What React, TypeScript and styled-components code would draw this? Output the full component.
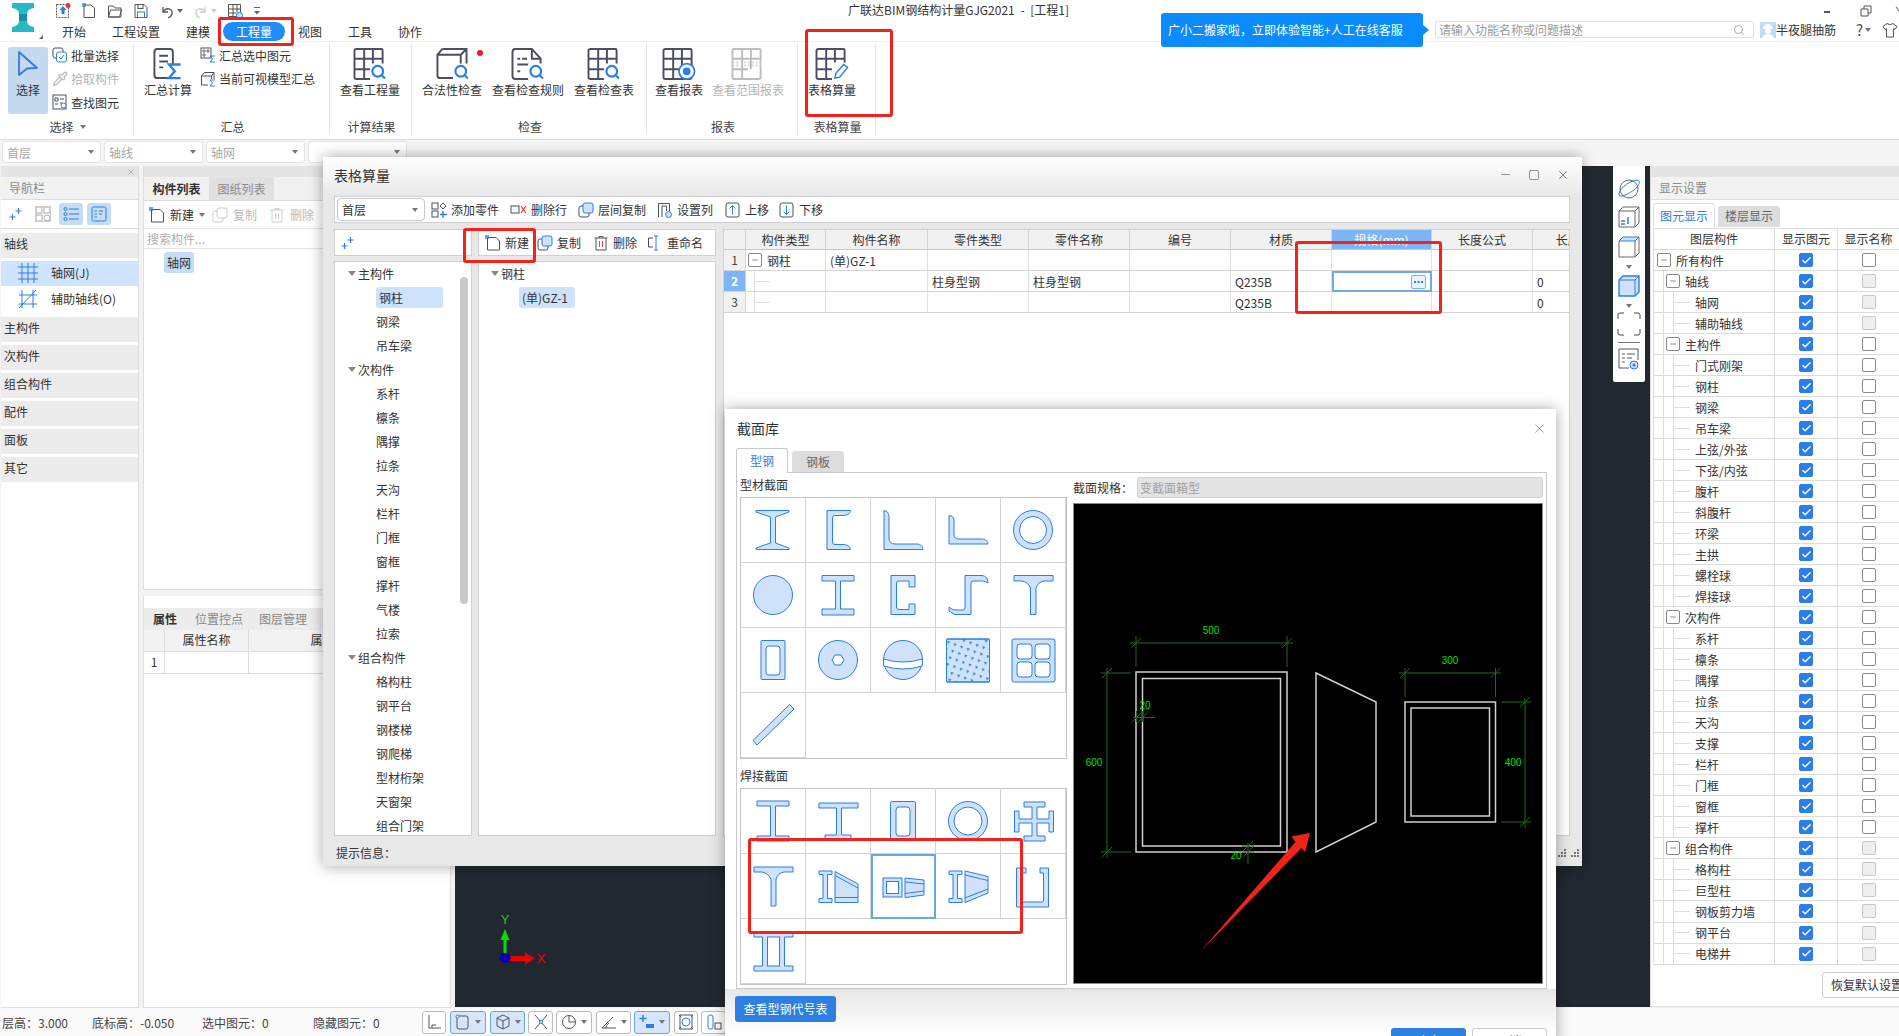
import React from 'react';
import styled, { createGlobalStyle } from 'styled-components';
import { Check, Minus, Pipette, Search, Square, X } from 'lucide-react';

const BLUE = '#2b7de9';
const DK = '#4a5060';
const GR = '#bdbdbd';
const FILL = '#cfe2fb';

const Global = createGlobalStyle`
  html, body { margin: 0; padding: 0; background: #f5f5f5; overflow: hidden; }
  body { font-family: "Noto Sans CJK SC", "Liberation Sans", sans-serif; font-size: 12px; color: #333; }
  svg { display: block; flex: none; }
`;

const Page = styled.div`position: relative; width: 1899px; height: 1036px; overflow: hidden; display: flex; flex-direction: column; background: #f3f3f3;`;

/* ---------- top bar ---------- */
const TopBar = styled.header`display: grid; grid-template-columns: 848px 313px 738px; height: 41px; flex: none; background: #fff;`;
const LeftBlock = styled.div`display: flex;`;
const LogoBox = styled.div`width: 44px; padding: 3px 0 0 11px; box-sizing: border-box; position: relative;
  &::after { content: ""; position: absolute; left: 39px; top: 35px; border-left: 4px solid transparent; border-bottom: 4px solid #666; }`;
const Stack = styled.div`display: flex; flex-direction: column;`;
const QatRow = styled.div`display: flex; align-items: center; gap: 10px; height: 22px; padding-left: 11px;`;
const QatCaret = styled.span<{ $c?: string }>`width: 0; height: 0; margin-left: -8px; border: 3px solid transparent; border-top: 4px solid ${p => p.$c || '#666'}; border-bottom: 0;`;
const MenuRow = styled.nav`display: flex; padding-left: 5px;`;
const MenuItem = styled.div<{ $on?: boolean }>`padding: 0 13px; height: 19px; line-height: 19px; border-radius: 10px; background: ${p => (p.$on ? '#1e8cff' : 'transparent')}; color: ${p => (p.$on ? '#fff' : '#333')};`;
const Title = styled.div`padding-top: 1px; line-height: 18px; white-space: nowrap; color: #333; word-spacing: 3px;`;
const RightBlock = styled.div`display: flex; align-items: flex-start;`;
const Notice = styled.div`position: relative; margin-top: 13px; width: 262px; height: 34px; line-height: 34px; padding-left: 7px; box-sizing: border-box; background: #0a8cff; color: #fff; border-radius: 3px; white-space: nowrap; z-index: 2;
  &::after { content: ""; position: absolute; right: -6px; top: 12px; border-left: 6px solid #0a8cff; border-top: 5px solid transparent; border-bottom: 5px solid transparent; }`;
const RightStack = styled.div`margin-left: 12px; width: 464px; display: flex; flex-direction: column;`;
const WinRow = styled.div`display: flex; height: 21px; align-items: center; color: #555;`;
const SearchRow = styled.div`display: flex; align-items: center; height: 17px;`;
const SearchBox = styled.div`width: 319px; height: 17px; box-sizing: border-box; display: flex; align-items: center; justify-content: space-between; padding: 0 8px 0 3px; border: 1px solid #e2e2e2; border-radius: 2px; color: #9a9a9a; line-height: 15px;`;
const Avatar = styled.span`margin-left: 6px;`;
const UserName = styled.span`width: 60px; white-space: nowrap; color: #333;`;
const Help = styled.span`width: 26px; margin-left: 20px; font-size: 15px; line-height: 17px; color: #555; display: flex; align-items: center; gap: 2px;`;

/* ---------- ribbon ---------- */
const Ribbon = styled.section`display: flex; height: 99px; box-sizing: border-box; flex: none; background: #fff; border-top: 1px solid #f0f0f0; border-bottom: 1px solid #dcdcdc;`;
const Group = styled.div<{ $w: number }>`display: flex; flex-direction: column; width: ${p => p.$w}px; height: 91px; margin-top: 2px; box-sizing: border-box; border-right: 1px solid #e4e4e4;`;
const GroupBody = styled.div<{ $pad?: number; $gap?: number }>`flex: 1; display: flex; align-items: flex-start; padding: 3px 0 0 ${p => p.$pad ?? 10}px; gap: ${p => p.$gap ?? 0}px;`;
const GroupLabel = styled.div`height: 16px; line-height: 16px; text-align: center; color: #444; display: flex; justify-content: center; align-items: center; gap: 6px; padding-left: 2px;`;
const BigBtn = styled.div<{ $off?: boolean }>`position: relative; display: flex; flex-direction: column; align-items: center; padding-top: 1px; white-space: nowrap; color: ${p => (p.$off ? '#b5b5b5' : '#333')};
  & > svg { margin-bottom: 1px; }`;
const SelectBtn = styled(BigBtn)`width: 40px; height: 67px; padding-top: 3px; box-sizing: border-box; background: #c5d9f0; border-radius: 2px;
  & > svg { margin-bottom: 4px; }`;
const SmallList = styled.div<{ $ml: number }>`display: flex; flex-direction: column; gap: 7.5px; margin-left: ${p => p.$ml}px;`;
const SmallBtn = styled.div<{ $off?: boolean }>`display: flex; align-items: center; gap: 3px; height: 16px; white-space: nowrap; color: ${p => (p.$off ? '#b5b5b5' : '#333')};`;
const RedDot = styled.span`position: absolute; right: -1px; top: 3px; width: 6px; height: 6px; border-radius: 50%; background: #ee1c25;`;
const TinyCaret = styled.span`display: inline-block; width: 0; height: 0; border: 3px solid transparent; border-top: 4px solid #777; border-bottom: 0;`;

/* ---------- combos ---------- */
const ComboBar = styled.div`display: flex; gap: 3px; height: 26px; flex: none; box-sizing: border-box; padding: 1px 0 0 2px; background: #f5f5f5;`;
const Combo = styled.div`width: 99px; height: 22px; box-sizing: border-box; padding: 0 6px 0 4px; display: flex; align-items: center; justify-content: space-between; background: #fff; border: 1px solid #e4e4e4; border-radius: 3px; color: #a8a8a8;`;

/* ---------- main ---------- */
const Main = styled.main`flex: 1; display: flex; min-height: 0; background: #f3f3f3;`;
const NavPanel = styled.aside`width: 138px; margin-left: 1px; background: #fff; border-right: 1px solid #dedede; border-bottom: 1px solid #dedede; box-sizing: border-box; display: flex; flex-direction: column;`;
const Strip = styled.div`height: 11px; flex: none; background: #e5e5e5; display: flex; justify-content: flex-end; align-items: center; padding-right: 2px; color: #aaa;`;
const PanelTitle = styled.div`height: 22px; line-height: 22px; flex: none; padding-left: 8px; background: #f2f2f2; color: #8a8a8a; border-bottom: 1px solid #dcdcdc;`;
const NavTools = styled.div`display: flex; align-items: center; height: 28px; flex: none; padding-left: 8px; border-bottom: 1px solid #dcdcdc;`;
const ToolToggle = styled.span<{ $ml: number }>`display: flex; align-items: center; justify-content: center; width: 24px; height: 22px; margin-left: ${p => p.$ml}px; border-radius: 3px; background: #c5dcf5;`;
const GreyIcon = styled.span<{ $ml: number }>`margin-left: ${p => p.$ml}px;`;
const NavHead = styled.div<{ $mt: number }>`height: 25px; line-height: 22px; flex: none; margin-top: ${p => p.$mt}px; padding-left: 3px; background: #ececec; color: #333;`;
const NavItem = styled.div<{ $on?: boolean; $h: number; $mt?: number }>`height: ${p => p.$h}px; flex: none; display: flex; align-items: center; gap: 13px; padding: 0 0 2px 17px; box-sizing: border-box; margin-top: ${p => p.$mt ?? 0}px; background: ${p => (p.$on ? '#cfe4ff' : '#fff')};`;

const ListColumn = styled.div`width: 308px; margin-left: 4px; display: flex; flex-direction: column; gap: 6px;`;
const ListPanel = styled.section<{ $grow?: boolean }>`${p => (p.$grow ? 'flex: 1;' : 'height: 424px;')} background: #fff; box-sizing: border-box; border: 1px solid #dedede; border-top: 0; overflow: hidden;`;
const ListTabs = styled.div`display: flex; height: 23px; background: #f1f1f1; border-bottom: 1px solid #dcdcdc;`;
const ListTab = styled.div<{ $on?: boolean }>`width: 65px; text-align: center; line-height: 23px; font-weight: ${p => (p.$on ? 700 : 400)}; color: ${p => (p.$on ? '#333' : '#8a8a8a')}; background: ${p => (p.$on ? '#f1f1f1' : '#e0e0e0')};`;
const ListTools = styled.div`display: flex; align-items: center; height: 27px; padding-left: 5px; gap: 5px; border-bottom: 1px solid #e4e4e4;`;
const ListTool = styled.span<{ $off?: boolean; $ml?: number }>`display: flex; align-items: center; gap: 5px; margin-left: ${p => p.$ml ?? 0}px; color: ${p => (p.$off ? '#bbb' : '#333')};`;
const SearchHint = styled.div`height: 19px; line-height: 19px; padding-left: 3px; color: #b0b0b0; border-bottom: 1px solid #e4e4e4;`;
const Chip = styled.span<{ $ml?: number; $mt?: number }>`display: inline-block; padding: 0 3px; height: 21px; line-height: 21px; border-radius: 3px; background: #c5dcf8; color: #333; margin: ${p => p.$mt ?? 0}px 0 0 ${p => p.$ml ?? 0}px;`;
const PropTabs = styled.div`display: flex; height: 22px; background: #ececec; margin-top: 12px; line-height: 21px; color: #888;`;
const PropTab = styled.span<{ $on?: boolean; $w: number }>`width: ${p => p.$w}px; text-align: center; font-weight: ${p => (p.$on ? 700 : 400)}; color: ${p => (p.$on ? '#333' : '#888')};`;
const PropRow = styled.div<{ $head?: boolean }>`display: grid; grid-template-columns: 21px 84px 160px 1fr; height: 21px; line-height: 19px; background: ${p => (p.$head ? '#f2f2f2' : '#fff')}; border-bottom: 1px solid #dedede;
  & > span { border-right: 1px solid #dedede; text-align: center; }`;

const Canvas = styled.div`position: relative; flex: 1; margin-left: 4px; margin-bottom: 1px; background: #212830;`;
const ViewBar = styled.div`position: absolute; left: 1158px; top: 0; width: 32px; height: 216px; background: #fff; border-radius: 0 0 2px 2px; display: flex; flex-direction: column; align-items: center; padding-top: 11px; box-sizing: border-box;`;
const ViewItem = styled.span<{ $mt: number }>`margin-top: ${p => p.$mt}px; display: flex;`;
const ViewRule = styled.div`width: 22px; height: 1px; background: #777; margin-top: 6px;`;
const AxisBox = styled.div`position: absolute; left: 40px; top: 744px;`;

const RightPanel = styled.aside`width: 249px; flex: none; display: flex; flex-direction: column; box-sizing: border-box; background: #fff; border-left: 1px solid #dedede; border-bottom: 1px solid #dedede; margin-bottom: 1px; overflow: hidden;`;
const DispTabs = styled.div`display: flex; align-items: flex-end; gap: 3px; height: 27px; padding-left: 2px; flex: none;`;
const DispTab = styled.div<{ $on?: boolean }>`width: 62px; text-align: center; height: ${p => (p.$on ? 24 : 21)}px; line-height: ${p => (p.$on ? 23 : 20)}px; box-sizing: border-box; border-radius: 3px 3px 0 0; ${p => (p.$on ? `color:${BLUE};background:#fff;border:1px solid #ddd;border-bottom:0;` : 'color:#666;background:#ddd;')}`;
const DispTable = styled.div`margin: 1px 0 0 2px; width: 246px; border-top: 1px solid #ddd; border-left: 1px solid #ddd; flex: none;`;
const DispRow = styled.div<{ $h: number }>`display: grid; grid-template-columns: 121px 63px 62px; height: ${p => p.$h}px; box-sizing: border-box; border-bottom: 1px solid #dcdcdc;`;
const DispHead = styled.div`text-align: center; line-height: 20px; white-space: nowrap; border-right: 1px solid #dcdcdc;`;
const CheckCell = styled.div`display: flex; align-items: center; justify-content: center; border-right: 1px solid #dcdcdc;`;
const TreeCell = styled.div<{ $lv: number }>`display: flex; align-items: center; white-space: nowrap; border-right: 1px solid #dcdcdc; box-sizing: border-box;
  padding-left: ${p => [3, 12, 41][p.$lv]}px;
  background:
    ${p => (p.$lv > 0 ? 'linear-gradient(#ddd,#ddd) 9px 0/1px 100% no-repeat,' : '')}
    ${p => (p.$lv > 1 ? 'linear-gradient(#ddd,#ddd) 19px 0/1px 100% no-repeat, linear-gradient(#ddd,#ddd) 19px 50%/17px 1px no-repeat,' : '')}
    #fff;`;
const Expander = styled.span`display: inline-flex; align-items: center; justify-content: center; width: 12px; height: 12px; margin-right: 5px; border: 1px solid #888; border-radius: 2px; background: #fff; color: #555; flex: none;`;
const CheckBox = styled.span<{ $on?: boolean; $off?: boolean }>`width: 14px; height: 14px; box-sizing: border-box; display: flex; align-items: center; justify-content: center; border-radius: 2px; background: ${p => (p.$on ? BLUE : p.$off ? '#eee' : '#fff')}; border: 1px solid ${p => (p.$on ? BLUE : p.$off ? '#c8c8c8' : '#8a8a8a')};`;
const RestoreBtn = styled.div`margin: 7px 0 0 171px; width: 100px; height: 26px; flex: none; line-height: 24px; padding-left: 8px; box-sizing: border-box; border: 1px solid #ccc; border-radius: 3px; white-space: nowrap; background: #fff;`;

/* ---------- status bar ---------- */
const StatusBar = styled.footer`display: flex; align-items: center; height: 28px; flex: none; padding-left: 2px; background: #fafafa; white-space: nowrap; color: #444;`;
const StatusItem = styled.span<{ $w: number }>`width: ${p => p.$w}px;`;
const StatusBtn = styled.span<{ $w: number; $on?: boolean; $gap: number }>`width: ${p => p.$w}px; height: 23px; margin-left: ${p => p.$gap}px; box-sizing: border-box; display: flex; align-items: center; justify-content: center; gap: 4px; border: 1px solid ${p => (p.$on ? '#69a5e8' : '#bbb')}; border-radius: 3px; background: ${p => (p.$on ? '#d6e6fa' : '#fff')};`;

/* ---------- windows ---------- */
const Win = styled.div<{ $l: number; $t: number; $w: number; $h: number; $bg: string }>`position: absolute; left: ${p => p.$l}px; top: ${p => p.$t}px; width: ${p => p.$w}px; height: ${p => p.$h}px; background: ${p => p.$bg}; box-shadow: 0 0 14px rgba(0,0,0,.35); display: flex; flex-direction: column; box-sizing: border-box;`;
const WinTitle = styled.div<{ $h: number; $pl: number; $pb?: number; $pr?: number }>`display: flex; align-items: center; justify-content: space-between; height: ${p => p.$h}px; flex: none; box-sizing: border-box; padding: 0 ${p => p.$pr ?? 12}px ${p => p.$pb ?? 0}px ${p => p.$pl}px; font-size: 14px; color: #333;`;
const WinBtns = styled.div`display: flex; gap: 16px; color: #555; align-items: center;`;
const WinToolbar = styled.div`display: flex; align-items: center; height: 27px; flex: none; box-sizing: border-box; margin: 0 12px 0 11px; padding-left: 2px; background: #fff; border: 1px solid #cfcfd4;`;
const FloorCombo = styled.div`width: 88px; height: 23px; box-sizing: border-box; display: flex; align-items: center; justify-content: space-between; padding: 0 6px 0 4px; border: 1px solid #c8c8c8; border-radius: 4px; font-size: 12px; margin-right: 6px;`;
const ToolItem = styled.span<{ $ml: number }>`display: flex; align-items: center; gap: 4px; margin-left: ${p => p.$ml}px; white-space: nowrap; font-size: 12px;`;
const WinBody = styled.div`display: flex; height: 607px; flex: none; margin: 6px 12px 0 11px; gap: 6px;`;
const TreeCol = styled.div<{ $w: number }>`width: ${p => p.$w}px; flex: none; display: flex; flex-direction: column; gap: 5px;`;
const TreeTools = styled.div`height: 27px; flex: none; box-sizing: border-box; background: #fff; border: 1px solid #cfcfd4; display: flex; align-items: center; padding-left: 6px;`;
const TreePanel = styled.div`position: relative; flex: 1; background: #fff; border: 1px solid #cfcfd4; box-sizing: border-box; overflow: hidden;`;
const TreeRow = styled.div<{ $indent: number }>`height: 23.97px; display: flex; align-items: center; padding-left: ${p => p.$indent}px; white-space: nowrap;
  & > i { width: 0; height: 0; border: 4px solid transparent; border-top: 5px solid #888; border-bottom: 0; margin-right: 2px; }`;
const TreeChip = styled.span<{ $w: number }>`width: ${p => p.$w}px; height: 21px; line-height: 21px; padding-left: 3px; box-sizing: border-box; background: ${FILL}; border-radius: 3px;`;
const Scrollbar = styled.div`position: absolute; right: 3px; top: 15px; width: 8px; height: 327px; border-radius: 4px; background: #c8c8c8;`;
const TablePanel = styled.div`flex: 1; margin-left: 1px; background: #fff; border: 1px solid #cfcfd4; box-sizing: border-box; overflow: hidden;`;
const DataGrid = styled.div`display: grid; grid-template-columns: 22px 80px 102px 101px 101px 101px 101px 100px 101px 101px; grid-template-rows: 20px repeat(3, 21px);`;
const GHead = styled.div<{ $sel?: boolean }>`text-align: center; line-height: 19px; white-space: nowrap; box-sizing: border-box; background: ${p => (p.$sel ? '#7cb6f6' : '#f1f1f1')}; color: ${p => (p.$sel ? '#fff' : '#333')}; border-right: 1px solid #d4d4d4; border-bottom: 1px solid #c8c8c8;`;
const GNum = styled.div<{ $sel?: boolean }>`text-align: center; line-height: 20px; box-sizing: border-box; font-weight: ${p => (p.$sel ? 700 : 400)}; background: ${p => (p.$sel ? '#7cb6f6' : '#f1f1f1')}; color: ${p => (p.$sel ? '#fff' : '#444')}; border-right: 1px solid #d4d4d4; border-bottom: 1px solid #d4d4d4;`;
const GCell = styled.div<{ $tree?: boolean; $tight?: boolean }>`display: flex; align-items: center; padding-left: ${p => (p.$tight ? 2 : 4)}px; box-sizing: border-box; white-space: nowrap; border-right: 1px solid #e0e0e0; border-bottom: 1px solid #d4d4d4;
  ${p => (p.$tree ? 'background: linear-gradient(#ddd,#ddd) 8px 0/1px 100% no-repeat, linear-gradient(#ddd,#ddd) 8px 50%/16px 1px no-repeat;' : '')}`;
const GEdit = styled.div`display: flex; align-items: center; justify-content: flex-end; padding-right: 4px; box-sizing: border-box; border: 2px solid #6fa9e6;`;
const DotsBtn = styled.span`width: 15px; height: 14px; display: flex; align-items: center; justify-content: center; box-sizing: border-box; border: 1px solid #7fb0ea; border-radius: 2px; background: #e9f2fd;`;
const HintBar = styled.div`height: 30px; padding: 3px 3px 0 13px; box-sizing: border-box; flex: none; display: flex; justify-content: space-between; align-items: center;`;

const SecTabs = styled.div`display: flex; align-items: flex-end; gap: 4px; height: 25px; padding-left: 11px; flex: none;`;
const SecTab = styled.div<{ $on?: boolean }>`width: 52px; height: ${p => (p.$on ? 25 : 21)}px; line-height: ${p => (p.$on ? 23 : 21)}px; box-sizing: border-box; text-align: center; border-radius: 3px 3px 0 0; position: relative; top: ${p => (p.$on ? 1 : 0)}px; ${p => (p.$on ? `color:${BLUE};background:#fff;border:1px solid #c8c8d0;border-bottom:0;` : 'color:#666;background:#ddd;')}`;
const SecBox = styled.div`display: flex; gap: 6px; width: 811px; height: 517px; flex: none; margin-left: 11px; padding-left: 3px; box-sizing: border-box; background: #fff; border: 1px solid #c8c8d0;`;
const SecLeft = styled.div`width: 327px; display: flex; flex-direction: column;`;
const SecLabel = styled.div<{ $h: number; $lh: number }>`height: ${p => p.$h}px; flex: none; line-height: ${p => p.$lh}px;`;
const SecGrid = styled.div<{ $rows: number }>`display: grid; grid-template-columns: repeat(5, 65px); grid-auto-rows: 65px; width: 327px; height: ${p => p.$rows * 65 + 2}px; box-sizing: border-box; border: 1px solid #c4c4c4; flex: none;`;
const SecCell = styled.div<{ $sel?: boolean; $empty?: boolean }>`box-sizing: border-box; ${p => (p.$empty ? '' : 'border-right: 1px solid #d4d4d4; border-bottom: 1px solid #d4d4d4;')} ${p => (p.$sel ? 'outline: 2px solid #68a8e6; outline-offset: -2px;' : '')}`;
const SecRight = styled.div`flex: 1; padding-top: 4px; display: flex; flex-direction: column; gap: 5px;`;
const SpecRow = styled.div`display: flex; align-items: center; height: 21px; flex: none;`;
const SpecLabel = styled.span`width: 64px; flex: none; white-space: nowrap;`;
const SpecInput = styled.div`width: 406px; height: 21px; line-height: 19px; box-sizing: border-box; padding-left: 2px; background: #e3e3e3; border: 1px solid #ccced6; border-radius: 3px; color: #a0a0a0;`;
const BlackView = styled.div`width: 470px; height: 481px; flex: none; background: #000; border: 1px solid #888; box-sizing: border-box;`;
const SecFoot = styled.div`flex: 1; background: linear-gradient(#e6e6e6, #fff 70%); padding: 7px 9px 0 10px; display: flex; flex-direction: column;`;
const BlueBtn = styled.div<{ $w: number }>`width: ${p => p.$w}px; height: 26px; line-height: 25px; flex: none; text-align: center; border-radius: 3px; background: #2d80e2; color: #fff;`;
const ActionRow = styled.div`display: flex; justify-content: flex-end; gap: 6px; margin-top: 6px;`;
const PlainBtn = styled.div<{ $w: number }>`width: ${p => p.$w}px; height: 26px; line-height: 24px; text-align: center; box-sizing: border-box; border: 1px solid #ccc; border-radius: 3px; background: #fff;`;

const RedBox = styled.div<{ $l: number; $t: number; $w: number; $h: number }>`position: absolute; left: ${p => p.$l}px; top: ${p => p.$t}px; width: ${p => p.$w}px; height: ${p => p.$h}px; box-sizing: border-box; border: 3px solid #f5211a; border-radius: 3px; pointer-events: none;`;
const ArrowLayer = styled.svg`position: absolute; left: 1195px; top: 828px;`;

/* ---------- icons ---------- */
type P = { c?: string };
const S = ({ s = 16, vb = 16, children }: { s?: number; vb?: number; children: React.ReactNode }) => (
  <svg width={s} height={s} viewBox={`0 0 ${vb} ${vb}`} fill="none">{children}</svg>
);
const Logo = () => (
  <svg width="24" height="29" viewBox="0 0 24 29"><path d="M1 0h22v5q-7 1-7 6v7q0 5 7 6v5H1v-5q7-1 7-6v-7Q8 6 1 5z" fill="#28b8c8" /><path d="M8 11h8v7H8z" fill="#1b8fa6" /></svg>
);
const QatUpload = () => <S><rect x="1.5" y="1.5" width="12" height="13" stroke="#555" strokeDasharray="2 1" /><path d="M8 3l3.500 4H9.500v4h-3V7H4.500z" fill={BLUE} /><circle cx="13" cy="2.500" r="2.500" fill="#e33" /></S>;
const QatDoc = () => <S><path d="M3 2v12.500h10.500V5L10 2z" stroke="#555" /><rect x="1" y="0" width="4" height="4" fill={BLUE} opacity=".7" /></S>;
const QatFolder = () => <S><path d="M1.500 3h5l1.500 2h6v9h-12.500z" stroke="#555" /><path d="M3.500 7h11l-2 7H1.500z" stroke="#555" /></S>;
const QatSave = () => <S><path d="M2 1.500h9l3 3V14.500H2z" stroke="#555" /><rect x="5" y="1.500" width="5" height="4" stroke="#555" /><rect x="4.500" y="9" width="7" height="5.500" stroke={BLUE} /></S>;
const QatUndo = ({ c = '#555' }: P) => <S><path d="M4 4v5h5" stroke={c} strokeWidth="1.300" /><path d="M4 9c3-5 10-4 9 2-.500 2-2 3-4 4" stroke={c} strokeWidth="1.300" /></S>;
const QatRedo = ({ c = '#ccc' }: P) => <S><path d="M12 4v5H7" stroke={c} strokeWidth="1.300" /><path d="M12 9C9 4 2 5 3 11c.500 2 2 3 4 4" stroke={c} strokeWidth="1.300" /></S>;
const QatGrid = () => <S><path d="M1.500 1.500h12v12h-12zM1.500 6h12M1.500 10h8M6 1.500v12M10 1.500v8" stroke="#555" /><circle cx="12.500" cy="12.500" r="3" fill={FILL} stroke={BLUE} /></S>;
const QatMore = () => <svg width="8" height="10" viewBox="0 0 8 10"><path d="M1 1.500h6" stroke="#666" /><path d="M1 5l3 3.500L7 5z" fill="#666" /></svg>;
const AvatarIcon = () => <S><rect width="16" height="16" fill="#bcdcf7" /><path d="M3 7a5 5 0 0 1 10 0z" fill="#fff" /><circle cx="8" cy="9" r="3" fill="#fff" /><path d="M2 16q1-4 6-4t6 4z" fill="#fff" /></S>;
const ShirtIcon = () => <S><path d="M5 1.500L1 4.500l2 3 1.500-1V15h7V6.500l1.500 1 2-3-4-3Q8 4 5 1.500z" stroke="#555" /></S>;

const SelectArrow = () => <svg width="22" height="27" viewBox="0 0 22 27" fill="none"><path d="M2 2l18 16-10 .5L2 25z" stroke={BLUE} strokeWidth="1.800" strokeLinejoin="round" /></svg>;
const BatchIcon = () => <S><rect x="1" y="1" width="10" height="10" rx="2" stroke={DK} /><rect x="4.500" y="5" width="10" height="10" rx="2" fill="#fff" stroke={BLUE} /><path d="M7 10l2 2 3-4" stroke={BLUE} /></S>;
const FindIcon = () => <S><rect x="1" y="1" width="13" height="14" stroke={DK} /><path d="M3 4h3v3H3zM8 5h4M3 10h3M8 9h2" stroke={DK} /><circle cx="11.500" cy="11.500" r="2.500" fill="#fff" stroke={BLUE} /></S>;
const SumSmall = () => <S><rect x="1" y="1" width="10" height="10" stroke={DK} /><path d="M3 3h2v2H3zM7 3h2v2H7zM3 7h2v2H3z" stroke={DK} strokeWidth=".800" /><path d="M15 9h-5l2.500 3L10 15h5" stroke={BLUE} /></S>;
const CubeSum = () => <S><path d="M1.500 5l3-3.500H14v9.500l-2 3H1.500z M1.500 5h10v9.500 M11.500 5L14 1.500" stroke={DK} /><rect x="8" y="8" width="8" height="8" fill="#fff" /><path d="M15 9h-5l2.500 3L10 15h5" stroke={BLUE} /></S>;

const Badge = ({ kind }: { kind: 'search' | 'eye' | 'pen' }) => {
  if (kind === 'search') return <g stroke={BLUE} strokeWidth="2.200"><rect x="17" y="16" width="17" height="17" fill="#fff" stroke="none" /><circle cx="25" cy="24" r="5.500" /><path d="M29 28l3.500 3.500" /></g>;
  if (kind === 'eye') return <g><circle cx="25" cy="24" r="8" fill="#fff" stroke={BLUE} strokeWidth="1.800" /><circle cx="25" cy="24" r="4" fill={BLUE} /></g>;
  return <g stroke={BLUE} strokeWidth="1.500"><rect x="17" y="15" width="17" height="18" fill="#fff" stroke="none" /><path d="M20 31l1-5L29 17l4 3-8 10z" fill="#fff" /></g>;
};
const TableBig = ({ badge, off }: { badge?: 'search' | 'eye' | 'pen'; off?: boolean }) => (
  <svg width="34" height="32" viewBox="0 0 34 33" fill="none">
    <path d="M3 1h26q1 0 1 2v27q0 2-2 2H3q-2 0-2-2V3q0-2 2-2zM1 11h29M1 22h16M11 1v31M20 1v21" stroke={off ? GR : DK} strokeWidth="2" />
    {off && <path d="M1 15h29M1 18h29" stroke="#d8d8d8" strokeWidth="2" strokeDasharray="2 2" />}
    {badge && <Badge kind={badge} />}
  </svg>
);
const SumBig = () => (
  <svg width="30" height="32" viewBox="0 0 30 33" fill="none">
    <path d="M19 31H4q-3 0-3-3V4q0-3 3-3h13q3 0 3 3v13" stroke={DK} strokeWidth="2" />
    <path d="M6 8h9M6 14h9M6 20h4" stroke={DK} strokeWidth="2" /><path d="M28 17H16l6 7-6 7h12" stroke={BLUE} strokeWidth="2.400" />
  </svg>
);
const CubeBig = () => (
  <svg width="32" height="32" viewBox="0 0 32 33" fill="none">
    <path d="M6 1h25v23M1 7l5-6M1 7h24v24H4q-3 0-3-3zM25 7l6-6" stroke={DK} strokeWidth="2" />
    <Badge kind="search" />
  </svg>
);
const DocBig = () => (
  <svg width="34" height="32" viewBox="0 0 34 33" fill="none">
    <path d="M4 1h17l9 10v21H4q-3 0-3-3V4q0-3 3-3zM21 1v10h9M6 11h3M11 11h5M6 17h12M6 24h3" stroke={DK} strokeWidth="2" />
    <Badge kind="search" />
  </svg>
);

const Sparkle = () => <svg width="14" height="14" viewBox="0 0 14 14"><path d="M9.500 1v6M6.500 4h6M3.500 7v6M.500 10h6" stroke={BLUE} strokeWidth="1.200" /></svg>;
const GridGrey = () => <S><rect x="1" y="1" width="6" height="6" stroke="#aaa" /><rect x="9" y="1" width="6" height="6" stroke="#aaa" /><rect x="1" y="9" width="6" height="6" stroke="#aaa" /><circle cx="12" cy="12" r="3" stroke="#aaa" /><rect x=".500" y=".500" width="15" height="15" stroke="#ccc" /></S>;
const ListIcon = () => <S><circle cx="2.500" cy="3" r="1.500" stroke={BLUE} /><circle cx="2.500" cy="8" r="1.500" stroke={BLUE} /><circle cx="2.500" cy="13" r="1.500" stroke={BLUE} /><path d="M6 3h10M6 8h10M6 13h10" stroke={BLUE} /></S>;
const DetailIcon = () => <S><rect x="1" y="1" width="14" height="14" rx="1.500" stroke={BLUE} /><path d="M3.500 5H6M8 5h4M3.500 8H6M8 8h3M3.500 11H6" stroke={BLUE} /></S>;
const AxisGrid = () => <svg width="20" height="20" viewBox="0 0 20 20"><path d="M0 4h20M0 10h20M0 16h20M4 0v20M10 0v20M16 0v20" stroke={BLUE} /></svg>;
const AxisAux = () => <svg width="20" height="20" viewBox="0 0 20 20"><path d="M1 6h18M1 15h18M4 1v18M15 1v18M1 19L18 1" stroke={BLUE} /></svg>;

const NewIcon = () => <S><path d="M2.500 2.500v12.500h12V6L11 2.500z" stroke={DK} /><rect x="0" y="0" width="4" height="4" fill={BLUE} opacity=".7" /></S>;
const CopyIcon = ({ off }: { off?: boolean }) => <S><rect x="1" y="4" width="10" height="11" rx="2" stroke={off ? '#ccc' : DK} /><rect x="5" y="1" width="10" height="10" rx="2" fill={off ? '#fff' : FILL} stroke={off ? '#ccc' : BLUE} /></S>;
const TrashIcon = ({ off }: { off?: boolean }) => <S><path d="M1.500 3h13M6 3V1.500h4V3M3 3v12h10V3" stroke={off ? '#ccc' : DK} /><path d="M6.500 6v6M9.500 6v6" stroke={off ? '#ccc' : '#e44'} /></S>;
const RenameIcon = () => <S><path d="M6 3H1.500v9H6" stroke={DK} /><path d="M9 1v14M7 1h4M7 15h4" stroke={BLUE} /></S>;
const AddPart = () => <S><rect x="1" y="1" width="6" height="6" stroke={DK} /><rect x="1" y="9" width="6" height="6" stroke={DK} /><path d="M12 1l3 3-3 3-3-3z" stroke={DK} /><path d="M12 9v7M9 12.500h7" stroke={BLUE} strokeWidth="1.400" /></S>;
const DelRow = () => <svg width="17" height="16" viewBox="0 0 17 16" fill="none"><rect x="1" y="4" width="8" height="7" stroke={DK} /><path d="M11 4l5 7M16 4l-5 7" stroke="#e33" strokeWidth="1.200" /></svg>;
const SetCol = () => <S><path d="M1.500 15V1.500h11V9M5 15V4h4.500v5" stroke={DK} /><circle cx="11.500" cy="12.500" r="3" fill={FILL} stroke={BLUE} /></S>;
const MoveIcon = ({ down }: { down?: boolean }) => <S><rect x="1" y="1" width="13" height="14" rx="2" stroke={DK} /><path d={down ? 'M7.500 3.500v9M4.500 9.500l3 3 3-3' : 'M7.500 12.500v-9M4.500 6.500l3-3 3 3'} stroke={BLUE} /></S>;
const Dots = () => <svg width="9" height="3" viewBox="0 0 9 3"><path d="M0 1h2v2H0zM3.500 1h2v2h-2zM7 1h2v2H7z" fill={BLUE} /></svg>;
const Grips = () => <svg width="22" height="10" viewBox="0 0 22 10"><path d="M7 1h2v2H7zM4 4h2v2H4zM7 4h2v2H7zM1 7h2v2H1zM4 7h2v2H4zM7 7h2v2H7zM20 1h2v2h-2zM17 4h2v2h-2zM20 4h2v2h-2zM14 7h2v2h-2zM17 7h2v2h-2zM20 7h2v2h-2z" fill="#777" /></svg>;

/* section icons in a 65 x 65 cell */
const Sec = ({ children }: { children: React.ReactNode }) => (
  <svg width="64" height="64" viewBox="0 0 64 64"><g fill={FILL} stroke="#2a7de1" strokeWidth="1">{children}</g></svg>
);
const W = { fill: '#fff' };
const sections: React.ReactNode[] = [
  <path key="a" d="M15 12.500H48V14L34.500 19V45L48 50V51.500H15V50L29.500 45V19L15 14Z" />,
  <path key="b" d="M21 12.500H44.500C44 16 41 17.500 37 17.500H29Q26.500 17.500 26.500 20V44Q26.500 46.500 29 46.500H37C41 46.500 44 48 44.500 51.500H21Z" />,
  <path key="c" d="M13 12.500C16 13 18 15 18 19V40Q18 46 24 46H46C50 46 52 49 52 51.500H13Z" />,
  <path key="d" d="M13 17.500C16 18 18 19 18 22V36Q18 41 23 41H46C50 41 52 44 52 46H13Z" />,
  <g key="e"><circle cx="32" cy="32" r="19.500" /><circle cx="32" cy="32" r="13.500" {...W} /></g>,
  <circle key="f" cx="32" cy="32" r="19.500" />,
  <path key="g" d="M16 12.500H48V18H34.500V46H48V52H16V46H29.500V18H16Z" />,
  <path key="h" d="M20 12.500H44V24H38V18H28Q25.500 18 25.500 20V44Q25.500 46.500 28 46.500H38V41H44V51.500H20Z" />,
  <path key="i" d="M29 12.500H46C50 13 52 16 52 20C49 18 46 18 43 18H37Q35 18 35 20V51.500H19L13 48V44C15 46 17 47 20 47H27Q29 47 29 45Z" />,
  <path key="j" d="M13 12.500H52V18H43Q37 19 35 25V51.500H29.500V25Q27 19 21 18H13Z" />,
  <g key="k"><rect x="20" y="12.500" width="24" height="39" rx="1" /><rect x="25" y="18" width="14" height="29" rx="3" {...W} /></g>,
  <g key="l"><circle cx="32" cy="32" r="19.500" /><path d="M26 32l3-5h6l3 5-3 5h-6z" {...W} /></g>,
  <g key="m"><circle cx="32" cy="32" r="19.500" /><path d="M12.500 31q19.500 6 39 0l-.3 7q-19 6-38.400 0z" {...W} /></g>,
  <g key="n"><defs><pattern id="dots" width="7" height="7" patternUnits="userSpaceOnUse" patternTransform="rotate(20)"><path d="M1 1l3 0-1.500 3z" fill="#2a7de1" stroke="none" /></pattern></defs><rect x="10.500" y="11" width="43" height="43" rx="1" /><rect x="10.500" y="11" width="43" height="43" rx="1" fill="url(#dots)" /></g>,
  <g key="o"><rect x="11" y="11" width="43" height="43" rx="2" /><rect x="16" y="16" width="15" height="15" rx="3" {...W} /><rect x="34" y="16" width="15" height="15" rx="3" {...W} /><rect x="16" y="34" width="15" height="15" rx="3" {...W} /><rect x="34" y="34" width="15" height="15" rx="3" {...W} /></g>,
  <path key="p" d="M48.500 11.500L53 16L16 52L12 47.500Z" />,
];
const HSmall = () => <path d="M13 17H26V20.500H21.500V44.500H26V48.500H13V44.500H17V20.500H13Z" />;
const welds: React.ReactNode[] = [
  <path key="a" d="M16 12H48V17H34.500V47H48V52H16V47H29.500V17H16Z" />,
  <path key="b" d="M13 14H52V19H35.500V46H45V51.500H19V46H30.500V19H13Z" />,
  <g key="c"><rect x="19.500" y="12.500" width="25" height="39" rx="2" /><rect x="25" y="18" width="14" height="29" rx="3" {...W} /></g>,
  <g key="d"><circle cx="32" cy="32" r="19.500" /><circle cx="32" cy="32" r="14" {...W} /></g>,
  <path key="e" d="M23 13H44V18H36V30H48V22H52.500V43H48V34H36V47H44V52H23V47H31V34H18V43H13.500V22H18V30H31V18H23Z" />,
  <path key="f" d="M13 13H52V18H43Q37 19 35 25V52H30V25Q27 19 21 18H13Z" />,
  <g key="g"><HSmall /><path d="M29 17.500L52 30V48.500H29Z" /><path d="M29 21.500L52 34M29 43.500H52" /></g>,
  <g key="h"><rect x="12" y="24" width="19" height="19" /><rect x="15.500" y="27.500" width="12" height="12" {...W} /><path d="M34 24L53 26V41L34 43.500Z" /><path d="M34 28L53 30M34 39.500L53 37" /></g>,
  <g key="i"><HSmall /><path d="M29 17L52 22.500V39L29 48.500Z" /><path d="M29 21L52 26.500M29 44L52 35" /></g>,
  <path key="j" d="M15.500 14H25V19H20.500V46Q20.500 48 22.500 48H41Q42.500 48 42.500 46V19H39V14H47.500V53H15.500Z" />,
  <g key="k"><path d="M13 13H52V18H43.500V47H52V52H13V47H21.500V18H13Z" /><rect x="26.500" y="18" width="12" height="29" {...W} /></g>,
];

const DimLine = styled.g`stroke: #1c6b1c; stroke-width: 1;`;
const DimText = styled.text`fill: #00e000; font-family: "Liberation Sans", sans-serif; font-size: 10px; text-anchor: middle;`;
const Outline = styled.g`fill: none; stroke: #cfcfcf; stroke-width: 1.500;`;
const tick = (x: number, y: number) => `M${x - 5} ${y + 5}L${x + 5} ${y - 5}`;
const BoxDrawing = () => (
  <svg width="468" height="479" viewBox="0 0 468 479">
    <Outline>
      <rect x="62" y="168" width="151" height="180" /><rect x="68.500" y="174.500" width="138" height="167.500" />
      <path d="M242 169L302 198V318L242 348Z" />
      <rect x="331" y="198" width="90.500" height="120" /><rect x="337" y="204" width="78.500" height="108" />
    </Outline>
    <DimLine fill="none">
      <path d={`M56 139H219M62 132V163M213 132V163 ${tick(62, 139)} ${tick(213, 139)}`} />
      <path d={`M33 164V354M27 169H57M27 348H57 ${tick(33, 169)} ${tick(33, 348)}`} />
      <path d={`M325 169H427M331 164V193M421.500 164V193 ${tick(331, 169)} ${tick(421.500, 169)}`} />
      <path d={`M451 194V324M427 198H457M427 318H457 ${tick(451, 198)} ${tick(451, 318)}`} />
      <path d={`M59 213.500H81M62.500 207V218M68.500 207V218 ${tick(62.500, 213.500)} ${tick(68.500, 213.500)}`} />
      <path d={`M174 339V360M168 342H180M168 348H180 ${tick(174, 342)} ${tick(174, 348)}`} />
    </DimLine>
    <DimText x="137" y="130">500</DimText>
    <DimText x="20" y="262">600</DimText>
    <DimText x="376" y="160">300</DimText>
    <DimText x="439" y="262">400</DimText>
    <DimText x="71" y="205">20</DimText>
    <DimText x="162" y="355">20</DimText>
  </svg>
);

const dispRows: [string, number, boolean?][] = [
  ['所有构件', 0], ['轴线', 1, true], ['轴网', 2, true], ['辅助轴线', 2, true], ['主构件', 1], ['门式刚架', 2], ['钢柱', 2], ['钢梁', 2], ['吊车梁', 2], ['上弦/外弦', 2], ['下弦/内弦', 2], ['腹杆', 2], ['斜腹杆', 2], ['环梁', 2], ['主拱', 2], ['螺栓球', 2], ['焊接球', 2], ['次构件', 1], ['系杆', 2], ['檩条', 2], ['隅撑', 2], ['拉条', 2], ['天沟', 2], ['支撑', 2], ['栏杆', 2], ['门框', 2], ['窗框', 2], ['撑杆', 2], ['组合构件', 1, true], ['格构柱', 2, true], ['巨型柱', 2, true], ['钢板剪力墙', 2, true], ['钢平台', 2, true], ['电梯井', 2, true],
];
const treeRows: [string, number][] = [
  ['主构件', 0], ['钢柱', 1], ['钢梁', 1], ['吊车梁', 1], ['次构件', 0], ['系杆', 1], ['檩条', 1], ['隅撑', 1], ['拉条', 1], ['天沟', 1], ['栏杆', 1], ['门框', 1], ['窗框', 1], ['撑杆', 1], ['气楼', 1], ['拉索', 1], ['组合构件', 0], ['格构柱', 1], ['钢平台', 1], ['钢楼梯', 1], ['钢爬梯', 1], ['型材桁架', 1], ['天窗架', 1], ['组合门架', 1],
];
const navSections = ['主构件', '次构件', '组合构件', '配件', '面板', '其它'];
const gridHeads = ['', '构件类型', '构件名称', '零件类型', '零件名称', '编号', '材质', '规格(mm)', '长度公式', '长度(mm)'];

const StatL = () => <S><path d="M3 1v13h12M6 14v-3h4" stroke="#555" /></S>;
const StatRect = () => <S><rect x="2" y="2" width="11" height="13" rx="2" stroke="#555" /><circle cx="2.500" cy="2.500" r="1.500" fill="#fff" stroke={BLUE} /></S>;
const StatCube = () => <S><path d="M8 1l6 3v8l-6 3-6-3V4zM2 4l6 3 6-3M8 7v8" stroke="#555" /></S>;
const StatX = () => <S><path d="M2 1l12 14M14 1L2 15" stroke="#555" /><circle cx="8" cy="8" r="1.500" fill="#fff" stroke={BLUE} /></S>;
const StatPie = () => <S><circle cx="8" cy="8" r="6.500" stroke="#555" /><path d="M8 2v6h6" stroke="#555" /></S>;
const StatAngle = () => <S><path d="M1 14h14M1 14L12 3M5 14q0-3 3-5" stroke="#555" /></S>;
const StatPlus = () => <S><path d="M4 1v7M.500 4.500h7" stroke={BLUE} strokeWidth="1.400" /><rect x="7" y="10" width="8" height="4" fill={BLUE} /></S>;
const StatFrame = () => <S><rect x="2" y="1" width="12" height="14" stroke="#555" /><circle cx="8" cy="8" r="4" stroke={BLUE} /><path d="M1 1l2 2M15 1l-2 2M1 15l2-2M15 15l-2-2" stroke="#555" /></S>;
const StatBar = () => <S><rect x="2" y="1" width="5" height="14" rx="2" stroke={BLUE} /><rect x="9" y="9" width="6" height="6" stroke="#555" /></S>;

export default function App() {
  return (
    <Page>
      <Global />
      <TopBar>
        <LeftBlock>
          <LogoBox><Logo /></LogoBox>
          <Stack>
            <QatRow>
              <QatUpload /><QatDoc /><QatFolder /><QatSave /><QatUndo /><QatCaret /><QatRedo /><QatCaret $c="#ccc" /><QatGrid /><QatMore />
            </QatRow>
            <MenuRow>
              <MenuItem>开始</MenuItem><MenuItem>工程设置</MenuItem><MenuItem>建模</MenuItem><MenuItem $on>工程量</MenuItem><MenuItem>视图</MenuItem><MenuItem>工具</MenuItem><MenuItem>协作</MenuItem>
            </MenuRow>
          </Stack>
        </LeftBlock>
        <Title>广联达BIM钢结构计量GJG2021 - [工程1]</Title>
        <RightBlock>
          <Notice>广小二搬家啦，立即体验智能+人工在线客服</Notice>
          <RightStack>
            <WinRow>
              <svg width="464" height="14" viewBox="0 0 464 14" fill="none"><path d="M389 8h6" stroke="#555" strokeWidth="2" /><path d="M426 5h7v7h-7zM429 5V2h7v7h-3" stroke="#555" /><path d="M461 3l3 4" stroke="#555" /></svg>
            </WinRow>
            <SearchRow>
              <SearchBox>请输入功能名称或问题描述<Search size={12} color="#aaa" /></SearchBox>
              <Avatar><AvatarIcon /></Avatar>
              <UserName>半夜腿抽筋</UserName>
              <Help>?<TinyCaret /></Help>
              <ShirtIcon />
            </SearchRow>
          </RightStack>
        </RightBlock>
      </TopBar>

      <Ribbon>
        <Group $w={134}>
          <GroupBody $pad={8}>
            <SelectBtn><SelectArrow />选择</SelectBtn>
            <SmallList $ml={4}>
              <SmallBtn><BatchIcon />批量选择</SmallBtn>
              <SmallBtn $off><Pipette size={16} color="#bbb" />拾取构件</SmallBtn>
              <SmallBtn><FindIcon />查找图元</SmallBtn>
            </SmallList>
          </GroupBody>
          <GroupLabel>选择<TinyCaret /></GroupLabel>
        </Group>
        <Group $w={196}>
          <GroupBody>
            <BigBtn><SumBig />汇总计算</BigBtn>
            <SmallList $ml={8}>
              <SmallBtn><SumSmall />汇总选中图元</SmallBtn>
              <SmallBtn><CubeSum />当前可视模型汇总</SmallBtn>
            </SmallList>
          </GroupBody>
          <GroupLabel>汇总</GroupLabel>
        </Group>
        <Group $w={82}>
          <GroupBody><BigBtn><TableBig badge="search" />查看工程量</BigBtn></GroupBody>
          <GroupLabel>计算结果</GroupLabel>
        </Group>
        <Group $w={235}>
          <GroupBody $gap={10}>
            <BigBtn><CubeBig /><RedDot />合法性检查</BigBtn>
            <BigBtn><DocBig />查看检查规则</BigBtn>
            <BigBtn><TableBig badge="search" />查看检查表</BigBtn>
          </GroupBody>
          <GroupLabel>检查</GroupLabel>
        </Group>
        <Group $w={151}>
          <GroupBody $pad={8} $gap={9}>
            <BigBtn><TableBig badge="eye" />查看报表</BigBtn>
            <BigBtn $off><TableBig off />查看范围报表</BigBtn>
          </GroupBody>
          <GroupLabel>报表</GroupLabel>
        </Group>
        <Group $w={78}>
          <GroupBody><BigBtn><TableBig badge="pen" />表格算量</BigBtn></GroupBody>
          <GroupLabel>表格算量</GroupLabel>
        </Group>
      </Ribbon>

      <ComboBar>
        <Combo>首层<TinyCaret /></Combo>
        <Combo>轴线<TinyCaret /></Combo>
        <Combo>轴网<TinyCaret /></Combo>
        <Combo><span /><TinyCaret /></Combo>
      </ComboBar>

      <Main>
        <NavPanel>
          <Strip><X size={10} /></Strip>
          <PanelTitle>导航栏</PanelTitle>
          <NavTools>
            <Sparkle />
            <GreyIcon $ml={12}><GridGrey /></GreyIcon>
            <ToolToggle $ml={8}><ListIcon /></ToolToggle>
            <ToolToggle $ml={4}><DetailIcon /></ToolToggle>
          </NavTools>
          <NavHead $mt={4}>轴线</NavHead>
          <NavItem $on $h={25} $mt={3}><AxisGrid />轴网(J)</NavItem>
          <NavItem $h={27}><AxisAux />辅助轴线(O)</NavItem>
          {navSections.map((s, i) => <NavHead key={s} $mt={i === 0 ? 4 : 3}>{s}</NavHead>)}
        </NavPanel>

        <ListColumn>
          <ListPanel>
            <Strip />
            <ListTabs><ListTab $on>构件列表</ListTab><ListTab>图纸列表</ListTab></ListTabs>
            <ListTools>
              <ListTool><NewIcon />新建<TinyCaret /></ListTool>
              <ListTool $off $ml={2}><CopyIcon off />复制</ListTool>
              <ListTool $off $ml={7}><TrashIcon off />删除</ListTool>
              <ListTool $ml={4}><CopyIcon /></ListTool>
            </ListTools>
            <SearchHint>搜索构件...</SearchHint>
            <Chip $ml={20} $mt={3}>轴网</Chip>
          </ListPanel>
          <ListPanel $grow>
            <PropTabs><PropTab $on $w={42}>属性</PropTab><PropTab $w={66}>位置控点</PropTab><PropTab $w={62}>图层管理</PropTab></PropTabs>
            <PropRow $head><span /><span>属性名称</span><span>属性值</span></PropRow>
            <PropRow><span>1</span><span /><span /></PropRow>
          </ListPanel>
        </ListColumn>

        <Canvas>
          <AxisBox>
            <svg width="60" height="60" viewBox="0 0 60 60">
              <text x="10" y="14" fill="#18c818" fontSize="13" textAnchor="middle" fontFamily="Liberation Sans, sans-serif">Y</text>
              <path d="M8.500 30h3v16h-3z" fill="#00e000" /><path d="M10 19l4.500 11h-9z" fill="#00e000" />
              <path d="M15 46h15v5H15z" fill="#ee0000" /><path d="M30 42.500l10 6-10 6z" fill="#ee0000" />
              <ellipse cx="10" cy="48" rx="5.500" ry="5" fill="#0000b0" />
              <text x="46" y="53" fill="#ee0000" fontSize="13" textAnchor="middle" fontFamily="Liberation Sans, sans-serif">X</text>
            </svg>
          </AxisBox>
          <ViewBar>
            <ViewItem $mt={0}><svg width="24" height="24" viewBox="0 0 24 24" fill="none"><circle cx="12" cy="12" r="9" stroke="#667" /><path d="M2 18C1 14 10 4 20 3c4 0 3 5-3 10-6 4-13 8-15 5z" stroke={BLUE} /></svg></ViewItem>
            <ViewItem $mt={5}><svg width="22" height="22" viewBox="0 0 22 22" fill="none"><path d="M1 5l4-4h16v16l-4 4H1zM1 5h16v16M17 5l4-4" stroke="#667" /><path d="M3 15h4M3 18h4M10 11v7" stroke={BLUE} strokeWidth="1.500" /></svg></ViewItem>
            <ViewItem $mt={8}><svg width="22" height="22" viewBox="0 0 22 22" fill="none"><path d="M5 1h16l-4 4H1z" fill={FILL} stroke={BLUE} /><path d="M1 5v16h16V5M21 1v16l-4 4" stroke="#667" /></svg></ViewItem>
            <ViewItem $mt={7}><TinyCaret /></ViewItem>
            <ViewItem $mt={6}><svg width="22" height="22" viewBox="0 0 22 22" fill={FILL}><path d="M5 1h16v16l-4 4H1V5z" stroke={BLUE} strokeWidth="1.400" /><path d="M1 5h16v16M17 5l4-4" stroke={BLUE} /></svg></ViewItem>
            <ViewItem $mt={7}><TinyCaret /></ViewItem>
            <ViewItem $mt={4}><svg width="24" height="24" viewBox="0 0 24 24" fill="none" stroke="#445"><path d="M1 7V3q0-2 2-2h4M17 1h4q2 0 2 2v4M23 17v4q0 2-2 2h-4M7 23H3q-2 0-2-2v-4" /></svg></ViewItem>
            <ViewRule />
            <ViewItem $mt={5}><svg width="22" height="22" viewBox="0 0 22 22" fill="none"><path d="M11 20H1V1h19v11M4 6h3M9 6h8M4 10h3M9 10h5M4 14h3" stroke="#556" /><circle cx="16" cy="17" r="4" fill={FILL} stroke={BLUE} /><circle cx="16" cy="17" r="1.500" fill={BLUE} /></svg></ViewItem>
          </ViewBar>
        </Canvas>

        <RightPanel>
          <Strip />
          <PanelTitle>显示设置</PanelTitle>
          <DispTabs><DispTab $on>图元显示</DispTab><DispTab>楼层显示</DispTab></DispTabs>
          <DispTable>
            <DispRow $h={21}><DispHead>图层构件</DispHead><DispHead>显示图元</DispHead><DispHead>显示名称</DispHead></DispRow>
            {dispRows.map(([name, lv, off]) => (
              <DispRow key={name} $h={21.03}>
                <TreeCell $lv={lv}>{lv < 2 && <Expander><Minus size={8} /></Expander>}{name}</TreeCell>
                <CheckCell><CheckBox $on><Check size={11} color="#fff" strokeWidth={3} /></CheckBox></CheckCell>
                <CheckCell><CheckBox $off={off} /></CheckCell>
              </DispRow>
            ))}
          </DispTable>
          <RestoreBtn>恢复默认设置</RestoreBtn>
        </RightPanel>
      </Main>

      <StatusBar>
        <StatusItem $w={90}>层高：3.000</StatusItem>
        <StatusItem $w={110}>底标高：-0.050</StatusItem>
        <StatusItem $w={111}>选中图元：0</StatusItem>
        <StatusItem $w={109}>隐藏图元：0</StatusItem>
        <StatusBtn $gap={0} $w={24}><StatL /></StatusBtn>
        <StatusBtn $gap={4} $w={36} $on><StatRect /><TinyCaret /></StatusBtn>
        <StatusBtn $gap={4} $w={35} $on><StatCube /><TinyCaret /></StatusBtn>
        <StatusBtn $gap={3} $w={25}><StatX /></StatusBtn>
        <StatusBtn $gap={3} $w={36}><StatPie /><TinyCaret /></StatusBtn>
        <StatusBtn $gap={4} $w={35}><StatAngle /><TinyCaret /></StatusBtn>
        <StatusBtn $gap={3} $w={36} $on><StatPlus /><TinyCaret /></StatusBtn>
        <StatusBtn $gap={4} $w={24}><StatFrame /></StatusBtn>
        <StatusBtn $gap={3} $w={25}><StatBar /></StatusBtn>
      </StatusBar>

      <Win $l={323} $t={157} $w={1259} $h={709} $bg="linear-gradient(#fff, #e8e8e8 39px, #e8e8e8)">
        <WinTitle $h={39} $pl={11} $pb={4}>
          表格算量
          <WinBtns>
            <Minus size={13} strokeWidth={1.200} /><Square size={12} strokeWidth={1.200} /><X size={14} strokeWidth={1.200} />
          </WinBtns>
        </WinTitle>
        <WinToolbar>
          <FloorCombo>首层<TinyCaret /></FloorCombo>
          <ToolItem $ml={0}><AddPart />添加零件</ToolItem>
          <ToolItem $ml={11}><DelRow />删除行</ToolItem>
          <ToolItem $ml={11}><CopyIcon />层间复制</ToolItem>
          <ToolItem $ml={11}><SetCol />设置列</ToolItem>
          <ToolItem $ml={12}><MoveIcon />上移</ToolItem>
          <ToolItem $ml={10}><MoveIcon down />下移</ToolItem>
        </WinToolbar>
        <WinBody>
          <TreeCol $w={138}>
            <TreeTools><Sparkle /></TreeTools>
            <TreePanel>
              {treeRows.map(([t, lv], i) => (
                <TreeRow key={t + i} $indent={lv === 0 ? 13 : 41}>
                  {lv === 0 && <i />}
                  {t === '钢柱' ? <TreeChip $w={67}>{t}</TreeChip> : t}
                </TreeRow>
              ))}
              <Scrollbar />
            </TreePanel>
          </TreeCol>
          <TreeCol $w={238}>
            <TreeTools>
              <ToolItem $ml={0}><NewIcon />新建</ToolItem>
              <ToolItem $ml={8}><CopyIcon />复制</ToolItem>
              <ToolItem $ml={12}><TrashIcon />删除</ToolItem>
              <ToolItem $ml={10}><RenameIcon />重命名</ToolItem>
            </TreeTools>
            <TreePanel>
              <TreeRow $indent={12}><i />钢柱</TreeRow>
              <TreeRow $indent={40}><TreeChip $w={56}>(单)GZ-1</TreeChip></TreeRow>
            </TreePanel>
          </TreeCol>
          <TablePanel>
            <DataGrid>
              {gridHeads.map(h => <GHead key={h} $sel={h === '规格(mm)'}>{h}</GHead>)}
              <GNum>1</GNum><GCell $tight><Expander><Minus size={8} /></Expander>钢柱</GCell><GCell>(单)GZ-1</GCell><GCell /><GCell /><GCell /><GCell /><GCell /><GCell /><GCell />
              <GNum $sel>2</GNum><GCell $tree /><GCell /><GCell>柱身型钢</GCell><GCell>柱身型钢</GCell><GCell /><GCell>Q235B</GCell><GEdit><DotsBtn><Dots /></DotsBtn></GEdit><GCell /><GCell>0</GCell>
              <GNum>3</GNum><GCell $tree /><GCell /><GCell /><GCell /><GCell /><GCell>Q235B</GCell><GCell /><GCell /><GCell>0</GCell>
            </DataGrid>
          </TablePanel>
        </WinBody>
        <HintBar>提示信息：<Grips /></HintBar>
      </Win>

      <Win $l={725} $t={409} $w={831} $h={640} $bg="#fff">
        <WinTitle $h={38} $pl={12} $pr={9}>截面库<X size={15} strokeWidth={1} color="#666" /></WinTitle>
        <SecTabs><SecTab $on>型钢</SecTab><SecTab>钢板</SecTab></SecTabs>
        <SecBox>
          <SecLeft>
            <SecLabel $h={24} $lh={24}>型材截面</SecLabel>
            <SecGrid $rows={4}>
              {sections.map((s, i) => <SecCell key={i}><Sec>{s}</Sec></SecCell>)}
              <SecCell $empty />
            </SecGrid>
            <SecLabel $h={29} $lh={33}>焊接截面</SecLabel>
            <SecGrid $rows={3}>
              {welds.map((s, i) => <SecCell key={i} $sel={i === 7}><Sec>{s}</Sec></SecCell>)}
            </SecGrid>
          </SecLeft>
          <SecRight>
            <SpecRow><SpecLabel>截面规格：</SpecLabel><SpecInput>变截面箱型</SpecInput></SpecRow>
            <BlackView><BoxDrawing /></BlackView>
          </SecRight>
        </SecBox>
        <SecFoot>
          <BlueBtn $w={101}>查看型钢代号表</BlueBtn>
          <ActionRow><BlueBtn $w={75}>确定</BlueBtn><PlainBtn $w={75}>取消</PlainBtn></ActionRow>
        </SecFoot>
      </Win>

      <RedBox $l={218} $t={17} $w={76} $h={29} />
      <RedBox $l={805} $t={29} $w={88} $h={88} />
      <RedBox $l={463} $t={228} $w={73} $h={35} />
      <RedBox $l={1295} $t={241} $w={147} $h={73} />
      <RedBox $l={748} $t={838} $w={275} $h={96} />
      <ArrowLayer width="120" height="130" viewBox="0 0 120 130">
        <path d="M5 124L100.500 14L96.500 8.500L115 5L110 24L106.500 20Z" fill="#f0241c" />
      </ArrowLayer>
    </Page>
  );
}
